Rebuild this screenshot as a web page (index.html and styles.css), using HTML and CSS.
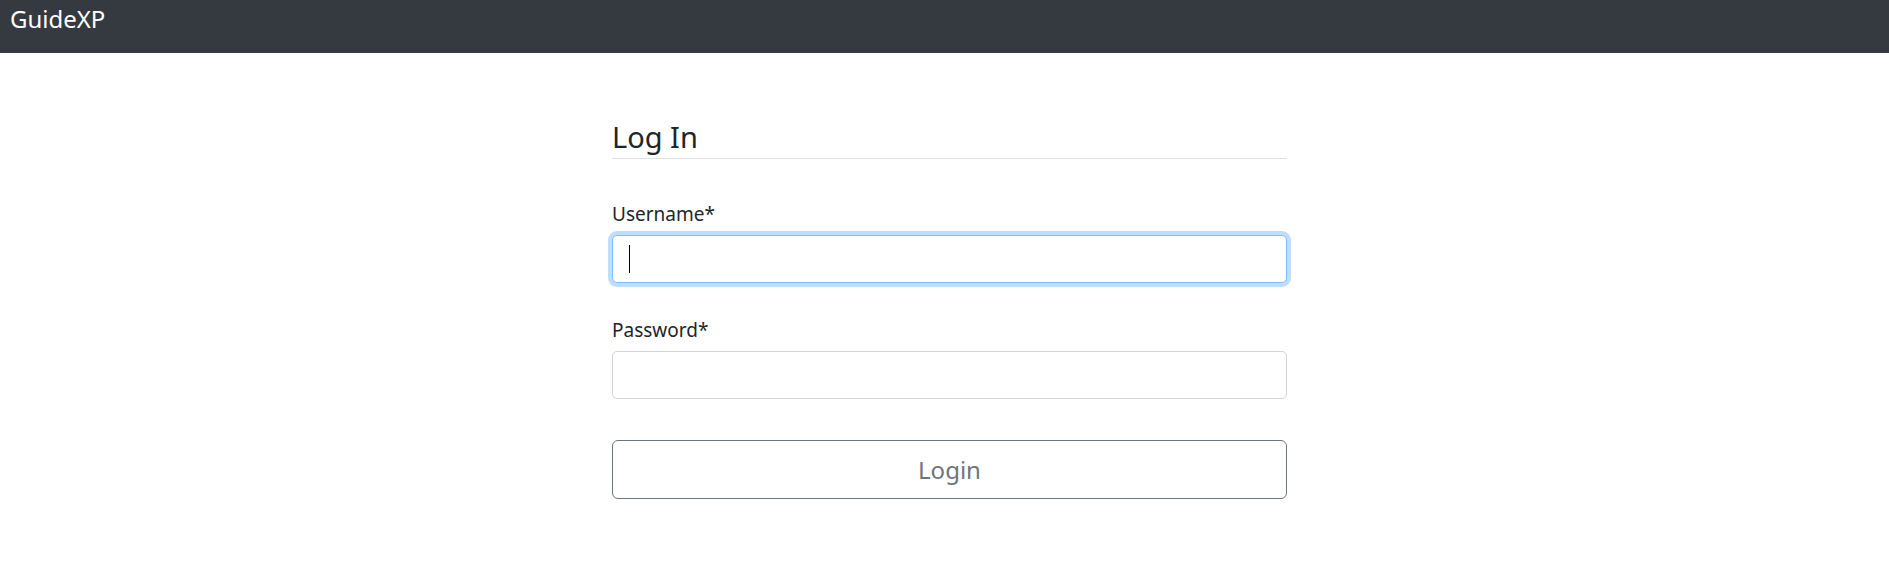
FILE: index.html
```html
<!DOCTYPE html>
<html lang="en">
<head>
<meta charset="utf-8">
<title>GuideXP - Log In</title>
<link rel="stylesheet" href="styles.css">
</head>
<body>
<nav class="navbar">
  <a class="brand" href="#">GuideXP</a>
</nav>
<main class="page">
  <form class="login">
    <h2 class="title">Log In</h2>
    <div class="group group-user">
      <label class="label" for="username">Username*</label>
      <div class="field">
        <input class="input input-focus" id="username" type="text">
        <span class="caret"></span>
      </div>
    </div>
    <div class="group group-pass">
      <label class="label" for="password">Password*</label>
      <div class="field">
        <input class="input" id="password" type="password">
      </div>
    </div>
    <button class="btn" type="button">Login</button>
  </form>
</main>
</body>
</html>
```
FILE: styles.css
```css
* { box-sizing: border-box; }
html, body { margin: 0; padding: 0; background: #fff; }
body {
  font-family: "Noto Sans", "Open Sans", "DejaVu Sans", sans-serif;
  color: #212529;
  font-size: 19px;
}
.navbar {
  height: 53px;
  background: #343a40;
  padding: 0 10px;
}
.brand {
  display: inline-block;
  color: #fff;
  text-decoration: none;
  font-size: 24px;
  line-height: 37px;
}
.page {
  display: flex;
  justify-content: center;
  padding-left: 10px;
  padding-top: 65px;
}
.login {
  width: 675px;
  display: flex;
  flex-direction: column;
}
.title {
  margin: 0;
  font-weight: 400;
  font-size: 29px;
  line-height: 38px;
  padding-bottom: 2px;
  border-bottom: 1px solid #dee2e6;
}
.group { display: flex; flex-direction: column; }
.group-user { margin-top: 40px; }
.group-pass { margin-top: 32px; }
.label {
  font-size: 19px;
  line-height: 30px;
  margin-bottom: 6px;
}
.field { position: relative; }
.input {
  display: block;
  width: 100%;
  height: 48px;
  border: 1px solid #ced4da;
  border-radius: 5px;
  background: #fff;
  font: inherit;
  padding: 0 15px;
  outline: none;
}
.input-focus {
  border-color: #80bdff;
  box-shadow: 0 0 0 4px rgba(0, 123, 255, 0.25);
}
.caret {
  position: absolute;
  left: 17px;
  top: 10px;
  width: 1px;
  height: 28px;
  background: #000;
}
.btn {
  margin-top: 41px;
  height: 59px;
  width: 100%;
  background: #fff;
  border: 1px solid #6c757d;
  border-radius: 6px;
  color: #6c757d;
  font-family: inherit;
  font-size: 24px;
  line-height: 36px;
  padding: 0;
  cursor: pointer;
}
```
